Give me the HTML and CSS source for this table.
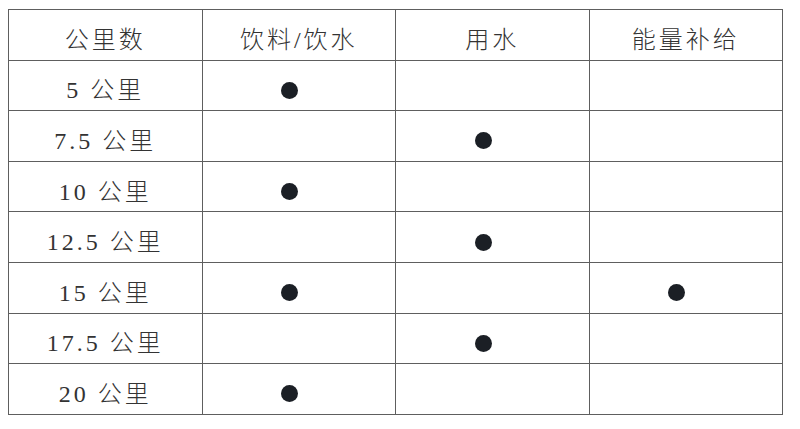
FILE: index.html
```html
<!DOCTYPE html>
<html lang="zh">
<head>
<meta charset="utf-8">
<link rel="stylesheet" href="styles.css">
</head>
<body>
<table class="grid">
  <tr><td>公里数</td><td>饮料/饮水</td><td>用水</td><td>能量补给</td></tr>
  <tr><td>5 公里</td><td><span class="dot"></span></td><td></td><td></td></tr>
  <tr><td>7.5 公里</td><td></td><td><span class="dot"></span></td><td></td></tr>
  <tr><td>10 公里</td><td><span class="dot"></span></td><td></td><td></td></tr>
  <tr><td>12.5 公里</td><td></td><td><span class="dot"></span></td><td></td></tr>
  <tr><td>15 公里</td><td><span class="dot"></span></td><td></td><td><span class="dot"></span></td></tr>
  <tr><td>17.5 公里</td><td></td><td><span class="dot"></span></td><td></td></tr>
  <tr><td>20 公里</td><td><span class="dot"></span></td><td></td><td></td></tr>
</table>
</body>
</html>
```
FILE: styles.css
```css
html, body {
  margin: 0;
  padding: 0;
  background: #ffffff;
}
.grid {
  border-collapse: collapse;
  table-layout: fixed;
  width: 775px;
  margin: 9px 0 0 8px;
  font-family: "Liberation Serif", "Noto Sans CJK SC", serif;
  font-size: 24px;
  letter-spacing: 3px;
  color: #333333;
}
.grid td {
  border: 1px solid #5e5e5e;
  height: 50.6px;
  box-sizing: border-box;
  padding: 10px 0 0;
  text-align: center;
  vertical-align: middle;
  line-height: 1;
  font-weight: 300;
}
.dot {
  display: inline-block;
  width: 17px;
  height: 17px;
  border-radius: 50%;
  background: #1b1f25;
  margin: 0 18px 4px 0;
  vertical-align: middle;
}
```
